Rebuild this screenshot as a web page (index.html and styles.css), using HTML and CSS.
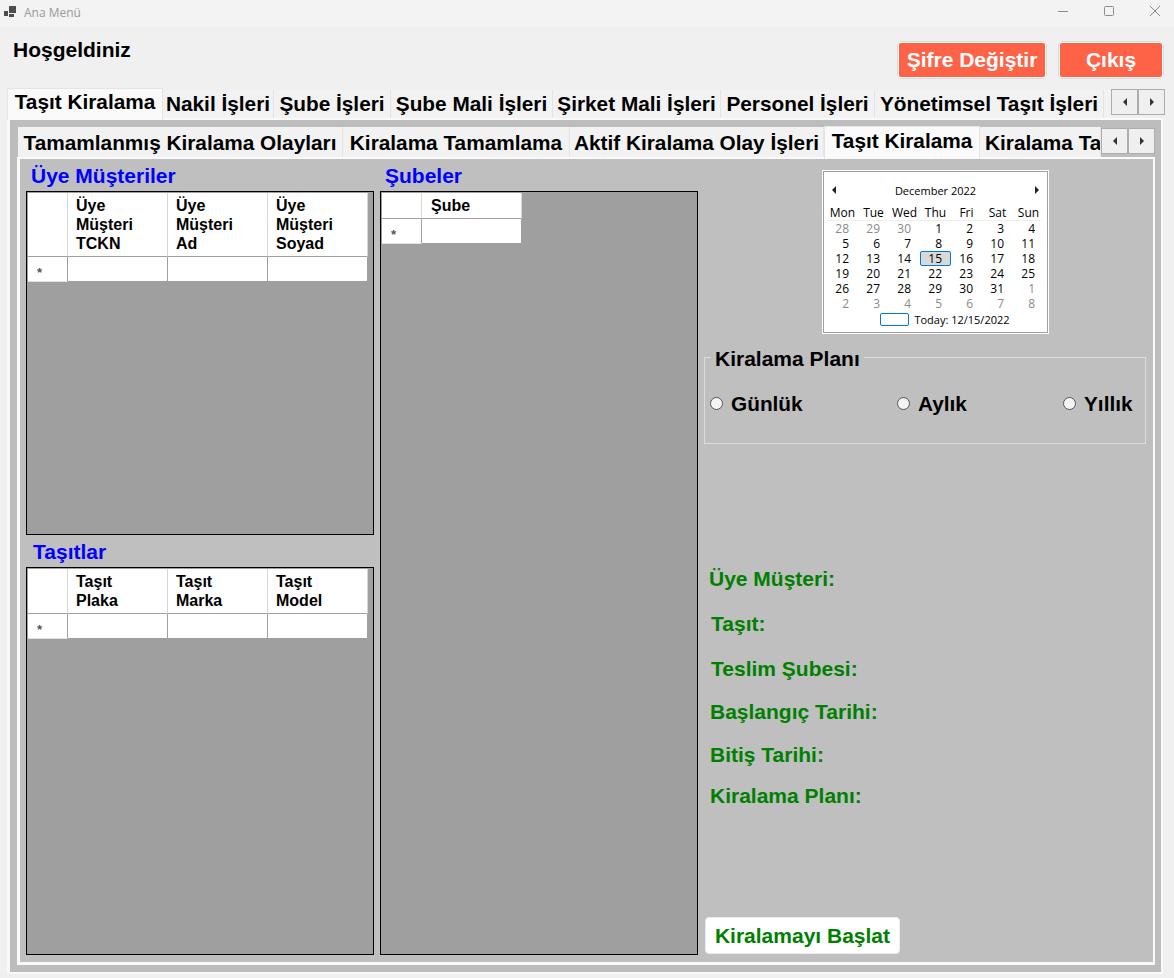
FILE: index.html
```html
<!DOCTYPE html>
<html lang="tr">
<head>
<meta charset="utf-8">
<title>Ana Menü</title>
<link rel="stylesheet" href="styles.css">
</head>
<body>
<div class="window">
  <div class="titlebar">
    <svg class="app-icon" width="14" height="12" viewBox="0 0 14 12"><path fill="#4d4d4d" d="M0 5h4v5H0zM5 0h7v7H5zM5 8h5v3H5z"/></svg>
    <span class="title-text">Ana Menü</span>
    <div class="win-controls">
      <svg width="10" height="10" viewBox="0 0 10 10"><path stroke="#8c8c8c" d="M0 5.5h10"/></svg>
      <svg width="10" height="10" viewBox="0 0 10 10"><rect x=".5" y=".5" width="9" height="9" rx="1" fill="none" stroke="#8c8c8c"/></svg>
      <svg width="10" height="10" viewBox="0 0 10 10"><path stroke="#8c8c8c" fill="none" d="M0 0l10 10M10 0L0 10"/></svg>
    </div>
  </div>
  <div class="header">
    <div class="welcome">Hoşgeldiniz</div>
    <div class="header-actions">
      <button class="danger-btn pw-btn">Şifre Değiştir</button>
      <button class="danger-btn exit-btn">Çıkış</button>
    </div>
  </div>
  <div class="tabstrip main-strip">
    <div class="tab active m1">Taşıt Kiralama</div>
    <div class="tab m2">Nakil İşleri</div>
    <div class="tab m3">Şube İşleri</div>
    <div class="tab m4">Şube Mali İşleri</div>
    <div class="tab m5">Şirket Mali İşleri</div>
    <div class="tab m6">Personel İşleri</div>
    <div class="tab m7">Yönetimsel Taşıt İşleri</div>
    <div class="tab m8"></div>
    <div class="scroller">
      <span class="arrow-btn"><i class="tri left"></i></span>
      <span class="arrow-btn"><i class="tri right"></i></span>
    </div>
  </div>
  <div class="outer-panel">
    <div class="tabstrip sub-strip">
      <div class="tab s1">Tamamlanmış Kiralama Olayları</div>
      <div class="tab s2">Kiralama Tamamlama</div>
      <div class="tab s3">Aktif Kiralama Olay İşleri</div>
      <div class="tab active s4">Taşıt Kiralama</div>
      <div class="tab s5">Kiralama Tamamlama</div>
      <div class="scroller">
        <span class="arrow-btn"><i class="tri left"></i></span>
        <span class="arrow-btn"><i class="tri right"></i></span>
      </div>
    </div>
    <div class="inner-panel">
      <div class="col col-left">
        <div class="section-label">Üye Müşteriler</div>
        <div class="grid-box box-members">
          <div class="dgrid cols3">
            <div class="hcell head-tall"></div>
            <div class="hcell head-tall">Üye<br>Müşteri<br>TCKN</div>
            <div class="hcell head-tall">Üye<br>Müşteri<br>Ad</div>
            <div class="hcell head-tall">Üye<br>Müşteri<br>Soyad</div>
            <div class="rowhead">*</div>
            <div class="cell"></div>
            <div class="cell"></div>
            <div class="cell"></div>
          </div>
        </div>
        <div class="section-label nudge">Taşıtlar</div>
        <div class="grid-box box-vehicles">
          <div class="dgrid cols3">
            <div class="hcell head-mid"></div>
            <div class="hcell head-mid">Taşıt<br>Plaka</div>
            <div class="hcell head-mid">Taşıt<br>Marka</div>
            <div class="hcell head-mid">Taşıt<br>Model</div>
            <div class="rowhead">*</div>
            <div class="cell"></div>
            <div class="cell"></div>
            <div class="cell"></div>
          </div>
        </div>
      </div>
      <div class="col col-mid">
        <div class="section-label">Şubeler</div>
        <div class="grid-box box-branches">
          <div class="dgrid cols1">
            <div class="hcell head-low"></div>
            <div class="hcell head-low">Şube</div>
            <div class="rowhead">*</div>
            <div class="cell"></div>
          </div>
        </div>
      </div>
      <div class="col col-right">
        <div class="calendar">
          <div class="cal-head">
            <i class="tri left dark"></i>
            <span>December 2022</span>
            <i class="tri right dark"></i>
          </div>
          <div class="cal-grid cal-dow">
            <span>Mon</span><span>Tue</span><span>Wed</span><span>Thu</span><span>Fri</span><span>Sat</span><span>Sun</span>
          </div>
          <div class="cal-grid cal-days">
            <span class="off">28</span><span class="off">29</span><span class="off">30</span><span>1</span><span>2</span><span>3</span><span>4</span>
            <span>5</span><span>6</span><span>7</span><span>8</span><span>9</span><span>10</span><span>11</span>
            <span>12</span><span>13</span><span>14</span><span class="sel">15</span><span>16</span><span>17</span><span>18</span>
            <span>19</span><span>20</span><span>21</span><span>22</span><span>23</span><span>24</span><span>25</span>
            <span>26</span><span>27</span><span>28</span><span>29</span><span>30</span><span>31</span><span class="off">1</span>
            <span class="off">2</span><span class="off">3</span><span class="off">4</span><span class="off">5</span><span class="off">6</span><span class="off">7</span><span class="off">8</span>
          </div>
          <div class="cal-today"><i class="today-box"></i><span>Today: 12/15/2022</span></div>
        </div>
        <div class="group">
          <div class="legend">Kiralama Planı</div>
          <div class="radios">
            <div class="radio r1"><i class="dot"></i><span>Günlük</span></div>
            <div class="radio r2"><i class="dot"></i><span>Aylık</span></div>
            <div class="radio r3"><i class="dot"></i><span>Yıllık</span></div>
          </div>
        </div>
        <div class="summary">
          <div class="sum s-a">Üye Müşteri:</div>
          <div class="sum s-b">Taşıt:</div>
          <div class="sum s-c">Teslim Şubesi:</div>
          <div class="sum s-d">Başlangıç Tarihi:</div>
          <div class="sum s-e">Bitiş Tarihi:</div>
          <div class="sum s-f">Kiralama Planı:</div>
        </div>
        <button class="start-btn">Kiralamayı Başlat</button>
      </div>
    </div>
  </div>
</div>
</body>
</html>
```
FILE: styles.css
```css
* { box-sizing: border-box; }
html, body { margin: 0; padding: 0; }
body {
  background: #f0f0f0;
  font-family: "Liberation Sans", Arial, sans-serif;
  color: #000;
}
.window {
  width: 1174px;
  height: 978px;
  display: flex;
  flex-direction: column;
  overflow: hidden;
}
.titlebar {
  height: 27px;
  flex: none;
  background: #f3f3f3;
  display: flex;
  align-items: center;
  padding-left: 4px;
}
.app-icon { margin-right: 6px; margin-top: -4px; }
.title-text {
  font: 12px "Open Sans", "Noto Sans", sans-serif;
  color: #9a9a9a;
  margin-top: -3px;
}
.win-controls {
  margin-left: auto;
  display: flex;
  gap: 36px;
  padding-right: 14px;
  margin-top: -5px;
}
.header {
  height: 61px;
  flex: none;
  display: flex;
  justify-content: space-between;
  padding: 11px 10px 0 13px;
}
.welcome {
  font-size: 21px;
  font-weight: 700;
  line-height: 24px;
}
.header-actions { display: flex; gap: 11px; padding-top: 3px; }
.danger-btn {
  height: 38px;
  background: #ff6347;
  border: 2px solid #fff;
  outline: 1px solid #dcdcdc;
  outline-offset: -1px;
  border-radius: 4px;
  color: #fff;
  font: 700 21px "Liberation Sans", Arial, sans-serif;
  padding: 0;
}
.pw-btn { width: 150px; }
.exit-btn { width: 106px; }

.tabstrip { display: flex; flex: none; }
.tab {
  flex: none;
  font-size: 20.8px;
  font-weight: 700;
  white-space: nowrap;
  background: #f2f2f2;
  border-right: 1px solid #e4e4e4;
  height: 28px;
  margin-top: 2px;
  line-height: 28px;
  text-align: center;
  overflow: hidden;
}
.tab.active {
  background: #fafafa;
  height: 32px;
  margin-top: 0;
  line-height: 25px;
  border: 1px solid #e4e4e4;
  border-bottom: 0;
  position: relative;
  z-index: 1;
}
.main-strip { height: 30px; padding-left: 7px; }
.m1 { width: 156px; }
.m2 { width: 111px; }
.m3 { width: 117px; }
.m4 { width: 162px; }
.m5 { width: 168px; }
.m6 { width: 154px; }
.m7 { width: 229px; }
.m8 { width: 7px; border-right: 0; }
.main-strip .scroller { margin-top: 1px; }
.scroller { display: flex; flex: none; height: 26px; }
.arrow-btn {
  width: 27px;
  height: 26px;
  background: #efefef;
  border: 1px solid #adadad;
  display: flex;
  align-items: center;
  justify-content: center;
}
.tri {
  display: block;
  width: 0;
  height: 0;
  border-top: 4px solid transparent;
  border-bottom: 4px solid transparent;
}
.tri.left { border-right: 4px solid #333; }
.tri.right { border-left: 4px solid #333; }
.outer-panel {
  flex: none;
  margin-left: 7px;
  width: 1156px;
  height: 856px;
  border: solid #fafafa;
  border-width: 2px 2px 2px 3px;
  background: #bdbdbd;
  padding: 6px 6px 7px 7px;
  display: flex;
  flex-direction: column;
}
.sub-strip { height: 31px; padding-left: 1px; }
.sub-strip .tab { margin-top: 1px; height: 30px; line-height: 32px; }
.sub-strip .tab.active { margin-top: 0; height: 33px; line-height: 28px; }
.sub-strip .tab.s5 { text-align: left; padding-left: 5px; }
.sub-strip .scroller { margin-top: 2px; }
.s1 { width: 325px; }
.s2 { width: 227px; }
.s3 { width: 254px; }
.s4 { width: 156px; }
.s5 { width: 121px; }
.inner-panel {
  flex: 1;
  border: solid #fafafa;
  border-width: 2px 2px 3px 3px;
  padding: 0 7px 7px 6px;
  display: flex;
  gap: 6px;
  min-height: 0;
  background-color: #bfbfbf;
}
.col { display: flex; flex-direction: column; flex: none; }
.col-left { width: 348px; }
.col-mid { width: 318px; }
.col-right { width: 442px; }
.section-label {
  height: 32px;
  line-height: 34px;
  padding-left: 5px;
  font-size: 21px;
  font-weight: 700;
  color: #0000ff;
  flex: none;
}
.section-label.nudge { padding-left: 7px; }
.grid-box {
  background: #9f9f9f;
  border: 1px solid #000;
  padding: 1px;
}
.box-members { height: 344px; flex: none; }
.box-vehicles { height: 388px; flex: none; }
.box-branches { height: 764px; flex: none; }
.dgrid { display: grid; width: fit-content; }
.cols3 { grid-template-columns: 40px 100px 100px 100px; }
.cols1 { grid-template-columns: 40px 100px; }
.hcell {
  background: #fff;
  border-right: 1px solid #d8d8d8;
  border-bottom: 1px solid #a0a0a0;
  font-size: 16px;
  font-weight: 700;
  line-height: 19px;
  padding: 3px 0 0 8px;
}
.head-tall { height: 64px; }
.head-mid { height: 45px; padding-top: 3px; }
.head-low { height: 26px; padding: 3px 0 0 9px; }
.rowhead {
  background: #fff;
  height: 25px;
  border-right: 1px solid #a0a0a0;
  border-bottom: 1px solid #e0e0e0;
  font-size: 13px;
  font-weight: 700;
  color: #555;
  text-align: left;
  padding-left: 9px;
  line-height: 32px;
}
.cell {
  background: #fff;
  height: 24px;
  border-right: 1px solid #a0a0a0;
}
.calendar {
  width: 225px;
  height: 162px;
  flex: none;
  margin: 12px 0 0 119px;
  background: #fff;
  border: 1px solid #a0a0a0;
  outline: 1px solid #fff;
  font: 12px "Open Sans", "Noto Sans", sans-serif;
  color: #000;
  padding: 9px 6px 0 3px;
}
.cal-head {
  display: flex;
  align-items: center;
  justify-content: space-between;
  height: 18px;
  padding: 0 2px 0 5px;
  font-size: 11px;
}
.tri.dark.left { border-right-color: #222; }
.tri.dark.right { border-left-color: #222; }
.cal-grid { display: grid; grid-template-columns: repeat(7, 31px); text-align: center; }
.cal-grid span { height: 15px; line-height: 15px; }
.cal-dow {
  margin-top: 6px;
  padding-bottom: 1px;
  height: 16px;
  border-bottom: 1px solid #eee;
}
.cal-days { text-align: right; }
.cal-days span { padding-right: 9px; }
.off { color: #8a8a8a; }
.cal-days .sel {
  background: #d9d9d9;
  border: 1px solid #0078d7;
  border-radius: 2px;
  padding-right: 8px;
  line-height: 13px;
}
.cal-today {
  display: flex;
  align-items: center;
  justify-content: center;
  gap: 5px;
  margin-top: 1px;
  height: 15px;
  padding-left: 22px;
  font-size: 11px;
}
.today-box {
  display: block;
  width: 29px;
  height: 13px;
  border: 1px solid #0078d7;
  border-radius: 2px;
}
.group {
  position: relative;
  flex: none;
  margin-top: 24px;
  height: 87px;
  border: 1px solid #dcdcdc;
}
.legend {
  position: absolute;
  top: -11px;
  left: 6px;
  padding: 0 4px;
  background: #bfbfbf;
  font-size: 21px;
  font-weight: 700;
  line-height: 24px;
}
.radios { display: flex; padding: 34px 0 0 5px; }
.radio {
  display: flex;
  align-items: center;
  gap: 8px;
  font-size: 20.8px;
  font-weight: 700;
  line-height: 24px;
}
.r1 { width: 187px; }
.r2 { width: 166px; }
.dot {
  display: block;
  width: 13px;
  height: 13px;
  border-radius: 50%;
  background: #f4f4f4;
  border: 1px solid #555;
  margin-top: -2px;
}
.summary {
  display: flex;
  flex-direction: column;
  padding-left: 6px;
  margin-top: 123px;
}
.sum {
  font-size: 21px;
  font-weight: 700;
  line-height: 24px;
  color: #008000;
  height: 24px;
}
.s-a { margin-left: -1px; }
.s-b { margin-top: 21px; margin-left: 1px; }
.s-c { margin-top: 21px; margin-left: 1px; }
.s-d { margin-top: 19px; }
.s-e { margin-top: 19px; }
.s-f { margin-top: 17px; }
.start-btn {
  margin: auto 0 1px 1px;
  width: 195px;
  height: 37px;
  flex: none;
  background: #fff;
  border: 1px solid #ececec;
  border-radius: 4px;
  color: #008000;
  font: 700 21px "Liberation Sans", Arial, sans-serif;
  padding: 0;
}
```
